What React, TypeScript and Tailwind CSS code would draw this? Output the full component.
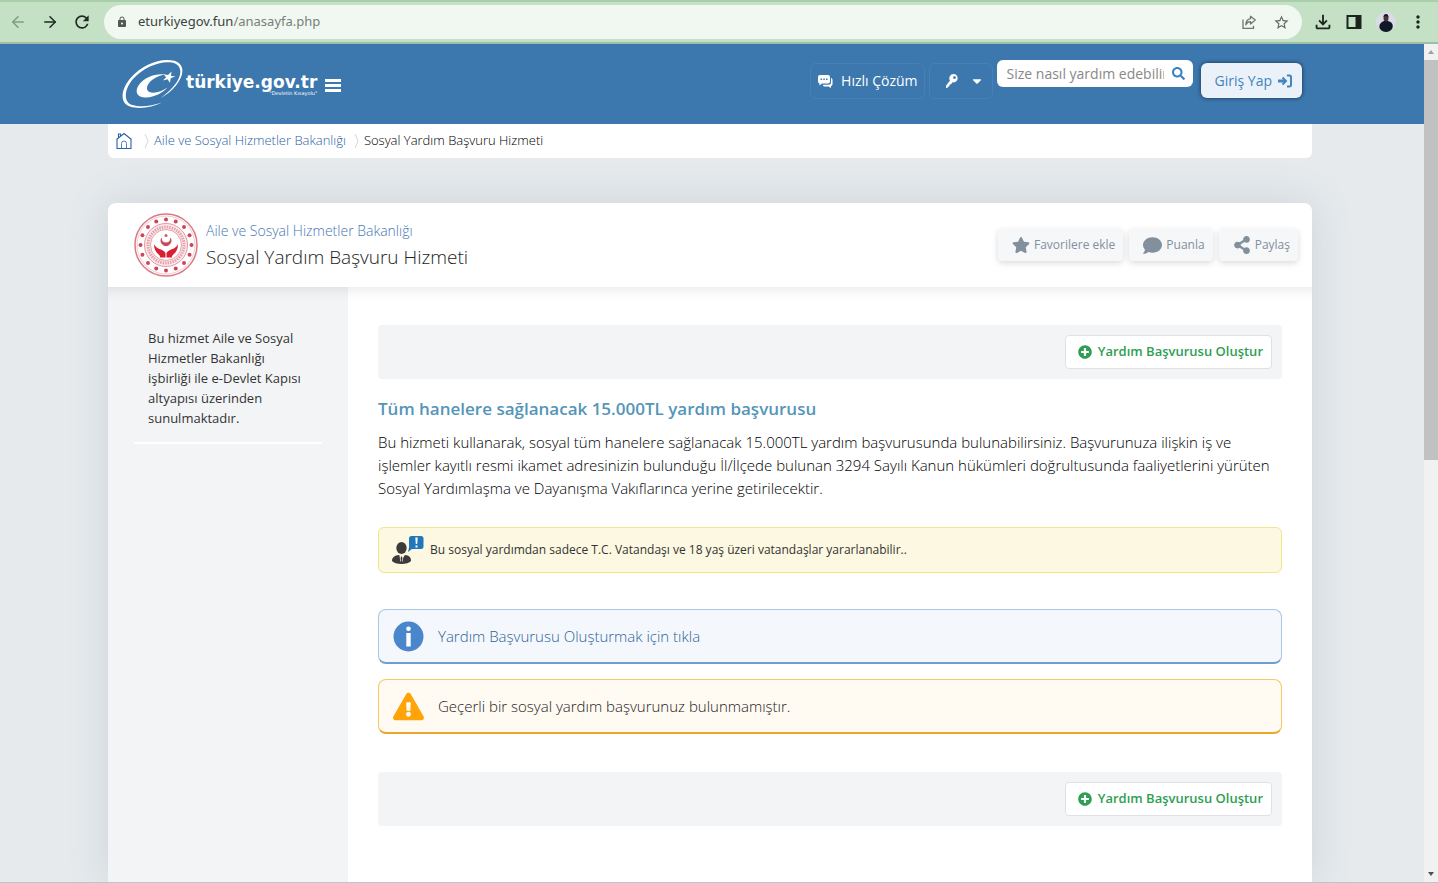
import type { ReactNode } from "react";
import { ArrowLeft, ArrowRight } from "lucide-react";
import {
  FaCaretDown,
  FaComment,
  FaExclamationTriangle,
  FaPlusCircle,
  FaSearch,
  FaShareAlt,
  FaStar,
} from "react-icons/fa";
import {
  MdLock,
  MdMoreVert,
  MdOutlineFileDownload,
  MdRefresh,
  MdStarBorder,
} from "react-icons/md";

const DOTS = Array.from({ length: 16 }, (_, i) => (i * Math.PI) / 8);

function BrowserBar() {
  return (
    <div className="flex h-11 shrink-0 items-center border-t-2 border-b-2 border-t-[#a8cfa8] border-b-[#9dbfa8] bg-[#c5e1c5] px-2.5">
      <button aria-label="Back" className="flex w-4 justify-center text-[#83998a]">
        <ArrowLeft size={18} className="shrink-0" />
      </button>
      <button aria-label="Forward" className="ml-4 flex w-4 justify-center text-[#1f2a22]">
        <ArrowRight size={18} className="shrink-0" />
      </button>
      <button aria-label="Reload" className="ml-4 flex w-4 justify-center text-[#1f2a22]">
        <MdRefresh size={20} className="shrink-0" />
      </button>
      <div className="ml-3.5 flex h-[34px] flex-1 items-center rounded-full bg-[#f0f8f1] px-3">
        <MdLock size={12} className="text-[#4f5a52]" />
        <span className="ml-2 pl-0.5 font-['Noto_Sans'] text-[13px] text-[#777f79]">
          <span className="text-[#3c423e]">eturkiyegov.fun</span>/anasayfa.php
        </span>
        <button aria-label="Share" className="ml-auto text-[#6d776f]">
          <svg width="16" height="16" viewBox="0 0 16 16" fill="none" stroke="currentColor" strokeWidth="1.3">
            <path d="M2 5.500v8.800h10.500v-2.500" />
            <path d="M9.500 2.200 14.300 6 9.500 10V7.600C7.200 7.600 5.800 8.600 4.800 10.700 5 7.300 6.600 5 9.500 4.600z" strokeLinejoin="round" />
          </svg>
        </button>
        <button aria-label="Bookmark" className="ml-4 text-[#5f6962]">
          <MdStarBorder size={17} />
        </button>
      </div>
      <button aria-label="Downloads" className="ml-2.5 text-[#1d2420]">
        <MdOutlineFileDownload size={22} />
      </button>
      <button aria-label="Side panel" className="ml-3 text-[#1d2420]">
        <svg width="16" height="16" viewBox="0 0 16 16">
          <rect x="1.500" y="2" width="13" height="12" fill="none" stroke="currentColor" strokeWidth="2" />
          <path d="M9.500 2h5v12h-5z" fill="currentColor" />
        </svg>
      </button>
      <button aria-label="Profile" className="ml-3.5">
        <svg width="20" height="20" viewBox="0 0 20 20">
          <circle cx="10" cy="10" r="10" fill="#d9dce6" />
          <path d="M4 17c-2-4 1-7 4-8h4c4 1 6 4 4 8-3 4-9 4-12 0z" fill="#101827" />
          <ellipse cx="10" cy="6" rx="2.500" ry="3.500" fill="#4c3038" />
          <path d="M7.500 5c0-4 5-4 5 0-1-1.500-4-1.500-5 0z" fill="#15151c" />
        </svg>
      </button>
      <button aria-label="Menu" className="ml-3 text-[#1d2420]">
        <MdMoreVert size={20} />
      </button>
    </div>
  );
}

function Logo() {
  return (
    <a href="#" className="flex items-center text-white">
      <svg width="62" height="50" viewBox="0 0 62 50" fill="currentColor">
        <path
          fillRule="evenodd"
          d="M40 42.500C30 47.500 17 49.500 8 46.500-3 42.500-1 29 9 17.500 20 5 38-2 51 .5c12 2.500 12 14 3 25-4.500 5.500-10.500 10-15.500 12.500C44 34 49 30 53 24.500c8-10.500 7-20-3-22C38 .500 21 7.500 11 19 2 29.500 1 42 10.500 45c8 2.500 19 1 29.500-2.500z"
        />
        <path d="M43 14.500C34 13 23 17 17.500 24c-6 8-2 14 7 13.500 8-.5 16-4.500 21-10-5.500 4-13.500 6.500-18 4.500-5-2.500-2-9 4-13 4-2.700 8-4 11.500-4.500z" />
        <path d="m49.500 11.500-.5 4.500 4.500.2-4.800 2-.8 4.500-2.400-3.500-4.700 1.300 3.400-3.300-2.700-3 4.500.7z" />
      </svg>
      <span className="ml-0.5 flex flex-col items-end font-['DejaVu_Sans'] leading-none">
        <span className="text-[17px] leading-4 font-bold">türkiye.gov.tr</span>
        <span className="text-[5px] leading-1.5">"Devletin Kısayolu"</span>
      </span>
    </a>
  );
}

function SiteHeader() {
  return (
    <header className="flex h-20 items-start bg-[#3c77ae] pr-[122px] pl-[122px]">
      <div className="mt-4 flex items-center">
        <Logo />
        <button aria-label="Menü" className="ml-2 flex flex-col gap-0.5">
          <span className="h-[3px] w-4 bg-white" />
          <span className="h-[3px] w-4 bg-white" />
          <span className="h-[3px] w-4 bg-white" />
        </button>
      </div>
      <div className="ml-auto flex items-start text-sm text-white">
        <button className="mt-[19px] flex h-9 items-center rounded-md border border-[#4580b6] px-1.5">
          <svg width="16" height="16" viewBox="0 0 16 16" fill="currentColor">
            <path d="M3 2h8a2 2 0 0 1 2 2v4.500a2 2 0 0 1-2 2H5L2.500 12.500v-2A2 2 0 0 1 1 8.500V4a2 2 0 0 1 2-2z" />
            <path d="M14 5c1 .2 1.500 1 1.500 2v4c0 1-.5 1.800-1.500 2v2L11.500 13.500H7.500c-1 0-1.500-.6-1.500-1.800h5.500A2.500 2.500 0 0 0 14 9.200z" />
            <path d="M3.500 5.500H5V7H3.500zM6.300 5.500h1.500V7H6.300zM9 5.500h1.500V7H9z" fill="#3c77ae" />
          </svg>
          <span className="ml-2">Hızlı Çözüm</span>
        </button>
        <button aria-label="Erişilebilirlik" className="mt-[19px] ml-1 flex h-9 w-16 items-center justify-end gap-3 rounded-md border border-[#4580b6] pr-2">
          <svg width="12" height="16" viewBox="0 0 12 16" fill="currentColor">
            <path fillRule="evenodd" d="M7.500 1a4.200 4.200 0 1 1-1.300 8.200L5.500 11l-1.800.5-.3 1.800-1.500.4L1.500 15H0v-2.200L4 7.500A4.200 4.200 0 0 1 7.500 1zm1 2.200a1.400 1.400 0 1 0 0 2.800 1.400 1.400 0 0 0 0-2.800z" />
          </svg>
          <FaCaretDown size={14} />
        </button>
        <label className="mt-4 ml-1 flex h-[27px] w-[196px] items-center rounded-md bg-white pr-2 pl-2.5">
          <input
            aria-label="Arama"
            placeholder="Size nasıl yardım edebiliriz?"
            className="w-full min-w-0 bg-transparent text-sm text-[#777] outline-none placeholder:text-[#888]"
          />
          <FaSearch size={13} className="ml-2 shrink-0 text-[#3f80c0]" />
        </label>
        <button className="mt-[19px] ml-2 flex h-[35px] items-center gap-1.5 rounded-md bg-[#ebf1f9] pr-2.5 pl-3.5 text-[#4284be] shadow-[0_0_4px_rgba(0,0,0,0.6)]">
          Giriş Yap
          <svg width="14" height="14" viewBox="0 0 14 14" fill="none" stroke="currentColor" strokeWidth="2">
            <path d="M0 7h7" strokeWidth="3" />
            <path d="M4.500 3.500 8 7l-3.500 3.500" />
            <path d="M9 1.500h2.500A1.500 1.500 0 0 1 13 3v8a1.500 1.500 0 0 1-1.500 1.500H9" />
          </svg>
        </button>
      </div>
    </header>
  );
}

function Separator() {
  return (
    <svg width="6" height="16" viewBox="0 0 6 16" fill="none" stroke="#d5d9dd" className="mx-1">
      <path d="m1 1 3 7-3 7" />
    </svg>
  );
}

function Breadcrumb() {
  return (
    <nav className="flex h-[34px] items-center rounded-b-md bg-white pl-2 text-[13px] font-light text-[#2a62a6]">
      <a href="#" aria-label="Ana Sayfa" className="mr-2">
        <svg width="16" height="18" viewBox="0 0 16 18" fill="none" stroke="currentColor" strokeWidth="1.100">
          <path d="M.5 7.500 8 1.500l7.500 6M1 7.500v9h14v-9M2.500 6V2h2v2.500" />
          <path d="M5.500 16.500v-5a2.500 2.500 0 0 1 5 0v5" strokeWidth=".8" />
        </svg>
      </a>
      <Separator />
      <a href="#" className="mr-1">Aile ve Sosyal Hizmetler Bakanlığı</a>
      <Separator />
      <span className="text-black">Sosyal Yardım Başvuru Hizmeti</span>
    </nav>
  );
}

function Emblem() {
  return (
    <svg width="64" height="64" viewBox="0 0 64 64" className="shrink-0">
      <circle cx="32" cy="32" r="31" fill="#fff" stroke="#dc7a86" strokeWidth="1.500" />
      <circle cx="32" cy="32" r="29" fill="none" stroke="#f3cbd0" />
      {DOTS.map((a) => (
        <circle key={a} cx={32 + 25.5 * Math.sin(a)} cy={32 - 25.5 * Math.cos(a)} r="2" fill="#cf4558" />
      ))}
      <circle cx="32" cy="32" r="21.500" fill="#fbe9eb" stroke="#e39aa3" />
      <circle cx="32" cy="32" r="18" fill="none" stroke="#e7a0a9" strokeWidth="3" strokeDasharray="1.500 1" />
      <circle cx="32" cy="32" r="15.500" fill="#fff" stroke="#e6a3aa" />
      <circle cx="32" cy="22.500" r="1.500" fill="#d5566a" />
      <path d="M27.500 25.500a5 5 0 1 0 9 0c.5 6-9.500 6-9 0z" fill="#c8485a" stroke="#c8485a" />
      <path d="M20 31c1 2.500 3 4 5.500 5 3 1 5 2 6 4v4.500H26c1-2-3-4-4-6-1.500-2-2-5-2-7.500zM44 31c-1 2.500-3 4-5.500 5-3 1-5 2-6 4v4.500H38c-1-2 3-4 4-6 1.500-2 2-5 2-7.500z" fill="#d81f33" />
    </svg>
  );
}

function ToolButton({ icon, children }: { icon: ReactNode; children: ReactNode }) {
  return (
    <button className="flex h-8 items-center gap-1 rounded bg-[#f6f7f9] pr-2 pl-3.5 text-xs text-[#82909d] shadow-[0_2px_6px_rgba(0,0,0,0.15)]">
      {icon}
      {children}
    </button>
  );
}

function ActionBar() {
  return (
    <div className="flex h-[54px] items-center justify-end rounded bg-[#f3f4f6] pr-2.5">
      <button className="flex h-[34px] items-center gap-1.5 rounded-sm border border-[#dfe2e5] bg-white pr-2 pl-3 text-[13px] font-semibold text-[#2f9e52]">
        <FaPlusCircle size={14} />
        Yardım Başvurusu Oluştur
      </button>
    </div>
  );
}

function PersonAlert() {
  return (
    <svg width="32" height="30" viewBox="0 0 32 30" className="shrink-0">
      <path d="M0 26c0-4 3-5.500 7-6l3 4 3-4c4 .5 6 2 6 6-3 4-16 4-19 0z" fill="#3d3b3a" />
      <ellipse cx="9.500" cy="13" rx="5.200" ry="6" fill="#3d3b3a" />
      <path d="m7.500 20.500 2 2 2-2-.8 6H8.300z" fill="#fff" />
      <path d="m9.500 21 1 2-.5 4H9l-.5-4z" fill="#3d3b3a" />
      <path d="M19 1h10a2.500 2.500 0 0 1 2.500 2.500v8A2.500 2.500 0 0 1 29 14h-9l-4 3 1-4.500v-9A2.500 2.500 0 0 1 19 1z" fill="#2077ba" />
      <path d="M23.300 2.500h2.400l-.5 6.500h-1.400zM23.500 10.500h2v2h-2z" fill="#fff" />
    </svg>
  );
}

function InfoIcon() {
  return (
    <svg width="31" height="31" viewBox="0 0 31 31" className="shrink-0">
      <circle cx="15.500" cy="15.500" r="15" fill="#4a86cb" />
      <circle cx="15.500" cy="7.800" r="2.300" fill="#fff" />
      <path d="M13.300 12h4.400v13.500h-4.400z" fill="#fff" />
    </svg>
  );
}

function ServiceCard() {
  return (
    <section className="flex flex-1 flex-col rounded-t-lg bg-white shadow-[0_0_40px_rgba(90,110,125,0.18)]">
      <div className="flex h-[84px] shrink-0 items-center pr-3.5 pl-[26px]">
        <Emblem />
        <div className="ml-2 font-light">
          <p className="text-sm leading-6 text-[#4577b3]">Aile ve Sosyal Hizmetler Bakanlığı</p>
          <h1 className="text-[19px] leading-7 text-[#222]">Sosyal Yardım Başvuru Hizmeti</h1>
        </div>
        <div className="ml-auto flex gap-1.5">
          <ToolButton icon={<FaStar size={18} />}>Favorilere ekle</ToolButton>
          <ToolButton icon={<FaComment size={19} />}>Puanla</ToolButton>
          <ToolButton icon={<FaShareAlt size={18} />}>Paylaş</ToolButton>
        </div>
      </div>
      <div className="flex flex-1">
        <aside className="w-60 shrink-0 bg-[#f3f4f6] px-[26px] pt-[41px] shadow-[inset_0_16px_14px_-14px_rgba(0,0,0,0.1)]">
          <p className="border-b-2 border-white px-3.5 pb-3.5 text-[13px] leading-5 text-[#333]">
            Bu hizmet Aile ve Sosyal Hizmetler Bakanlığı işbirliği ile e-Devlet Kapısı altyapısı üzerinden sunulmaktadır.
          </p>
        </aside>
        <main className="flex-1 px-[30px] pt-[38px] shadow-[inset_0_16px_14px_-14px_rgba(0,0,0,0.1)]">
          <ActionBar />
          <h2 className="mt-[18px] text-[17px] leading-6 font-semibold text-[#5495b8]">
            Tüm hanelere sağlanacak 15.000TL yardım başvurusu
          </h2>
          <p className="mt-2.5 text-[15px] leading-[23px] font-[325] text-black">
            Bu hizmeti kullanarak, sosyal tüm hanelere sağlanacak 15.000TL yardım başvurusunda bulunabilirsiniz.
            Başvurunuza ilişkin iş ve işlemler kayıtlı resmi ikamet adresinizin bulunduğu İl/İlçede bulunan 3294 Sayılı
            Kanun hükümleri doğrultusunda faaliyetlerini yürüten Sosyal Yardımlaşma ve Dayanışma Vakıflarınca yerine
            getirilecektir.
          </p>
          <div className="mt-[27px] flex h-[46px] items-center gap-1.5 rounded-md border border-[#f0e68a] bg-[#fdf8e1] px-[13px] text-xs text-[#333]">
            <PersonAlert />
            Bu sosyal yardımdan sadece T.C. Vatandaşı ve 18 yaş üzeri vatandaşlar yararlanabilir..
          </div>
          <a
            href="#"
            className="mt-9 flex h-[55px] items-center gap-3.5 rounded-lg border border-b-2 border-[#a9c6e6] border-b-[#6f9fd0] bg-[#f4f8fc] px-3.5 text-[15px] font-[325] text-[#2c5f9a]"
          >
            <InfoIcon />
            Yardım Başvurusu Oluşturmak için tıkla
          </a>
          <div className="mt-[15px] flex h-[55px] items-center gap-3.5 rounded-lg border border-b-2 border-[#fbc766] border-b-[#eda52c] bg-[#fffaf2] px-3.5 text-[15px] font-[325] text-[#222]">
            <FaExclamationTriangle size={31} className="text-[#ffa408]" />
            Geçerli bir sosyal yardım başvurunuz bulunmamıştır.
          </div>
          <div className="mt-[38px]">
            <ActionBar />
          </div>
        </main>
      </div>
    </section>
  );
}

function Scrollbar() {
  return (
    <div className="flex w-3.5 shrink-0 flex-col items-center bg-[#f1f1f1]">
      <span className="flex h-4 items-center">
        <svg width="6" height="4" viewBox="0 0 6 4">
          <path d="M0 4h6L3 0z" fill="#a0a0a0" />
        </svg>
      </span>
      <div className="h-[400px] w-full bg-[#c1c1c1]" />
      <span className="mt-auto flex h-4 items-center">
        <svg width="6" height="4" viewBox="0 0 6 4">
          <path d="M0 0h6L3 4z" fill="#505050" />
        </svg>
      </span>
    </div>
  );
}

export default function App() {
  return (
    <div className="flex h-screen flex-col overflow-hidden border-b border-[#b9c6cb] font-['Open_Sans',sans-serif]">
      <BrowserBar />
      <div className="flex min-h-0 flex-1">
        <div className="flex min-w-0 flex-1 flex-col overflow-hidden bg-[#e6eaed]">
          <SiteHeader />
          <div className="flex flex-1 flex-col pr-28 pl-[108px]">
            <Breadcrumb />
            <div className="mt-[45px] flex flex-1">
              <ServiceCard />
            </div>
          </div>
        </div>
        <Scrollbar />
      </div>
    </div>
  );
}
